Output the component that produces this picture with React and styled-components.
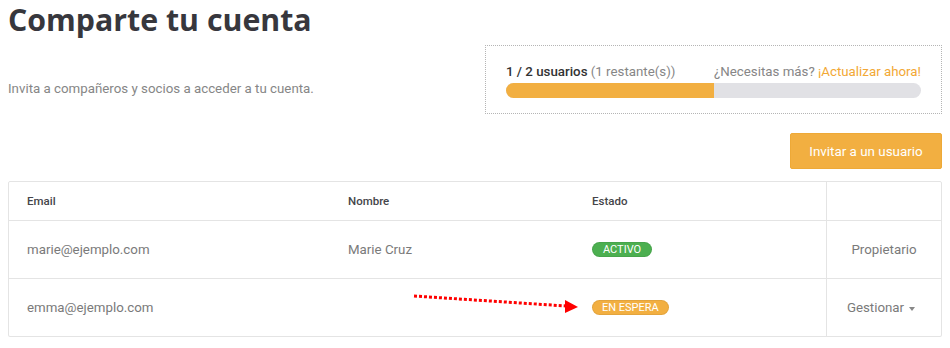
import React from 'react';
import styled, { createGlobalStyle } from 'styled-components';

const GlobalStyle = createGlobalStyle`
  body {
    margin: 0 8px 8px 8px;
    background: #fff;
    font-family: Roboto, "Liberation Sans", sans-serif;
  }
`;

const Page = styled.div`
  position: relative;
`;

const Title = styled.h1`
  margin: 0 0 10px 0;
  padding-top: 5px;
  font-family: "Open Sans", "Liberation Sans", sans-serif;
  font-weight: 700;
  font-size: 30.3px;
  line-height: 30px;
  color: #37373d;
`;

const TopRow = styled.div`
  display: flex;
  justify-content: space-between;
  align-items: flex-end;
`;

const Subtitle = styled.p`
  margin: 0 0 15px 0;
  font-size: 13.3px;
  line-height: 20px;
  color: #868686;
`;

const UsageBox = styled.div`
  width: 415px;
  border: 1px dotted #b5b5b5;
  padding: 17px 20px 15px 20px;
`;

const UsageLine = styled.div`
  display: flex;
  justify-content: space-between;
  font-size: 13.3px;
  line-height: 18px;
  color: #868686;
  margin-bottom: 2px;
`;

const Strong = styled.span`
  color: #333;
  font-weight: 500;
`;

const Upgrade = styled.span`
  color: #f2a835;
`;

const Bar = styled.div`
  height: 15px;
  border-radius: 8px;
  background: #e1e1e5;
  overflow: hidden;
`;

const BarFill = styled.div`
  height: 100%;
  background: #f2af41;
`;

const ButtonRow = styled.div`
  display: flex;
  justify-content: flex-end;
  margin: 19px 0 12px 0;
`;

const InviteButton = styled.button`
  height: 36px;
  width: 152px;
  border: 1px solid #eea937;
  border-radius: 2px;
  background: #f2af41;
  color: #fff;
  font-family: Roboto, "Liberation Sans", sans-serif;
  font-size: 13.4px;
  padding: 0;
`;

const Table = styled.div`
  border: 1px solid #e4e4e4;
  border-radius: 2px;
  box-shadow: 0 1px 1px rgba(0, 0, 0, 0.05);
`;

const Row = styled.div`
  display: grid;
  grid-template-columns: 320px 243px 254px 1fr;
  height: ${(p) => p.$h}px;
  border-top: ${(p) => (p.$first ? 'none' : '1px solid #e4e4e4')};
`;

const Cell = styled.div`
  display: flex;
  align-items: center;
  padding-left: ${(p) => p.$pl || 19}px;
  font-size: 13.3px;
  color: #7a7a7a;
`;

const HeadCell = styled(Cell)`
  font-size: 11.5px;
  font-weight: 500;
  color: #45454a;
`;

const ActionCell = styled.div`
  display: flex;
  align-items: center;
  justify-content: center;
  border-left: 1px solid #e4e4e4;
  font-size: 13.3px;
  color: #7a7a7a;
  gap: 5px;
`;

const Badge = styled.span`
  display: inline-block;
  padding: 0 ${(p) => p.$px}px;
  height: 15px;
  line-height: 15px;
  border-radius: 8px;
  background: ${(p) => p.$color};
  color: #fff;
  font-size: 11px;
  text-transform: uppercase;
  box-shadow: inset 0 0 0 1px rgba(0, 0, 0, 0.06);
`;

const Caret = styled.span`
  width: 0;
  height: 0;
  border-left: 3px solid transparent;
  border-right: 3px solid transparent;
  border-top: 4px solid #888;
  margin: 2px 6px 0 0;
`;

const Arrow = styled.svg`
  position: absolute;
  left: 392px;
  top: 284px;
`;

export default function App() {
  const used = 1;
  const total = 2;
  return (
    <Page>
      <GlobalStyle />
      <Title>Comparte tu cuenta</Title>
      <TopRow>
        <Subtitle>Invita a compañeros y socios a acceder a tu cuenta.</Subtitle>
        <UsageBox>
          <UsageLine>
            <span>
              <Strong>1 / 2 usuarios</Strong> (1 restante(s))
            </span>
            <span>
              ¿Necesitas más? <Upgrade>¡Actualizar ahora!</Upgrade>
            </span>
          </UsageLine>
          <Bar>
            <BarFill style={{ width: `${(used / total) * 100}%` }} />
          </Bar>
        </UsageBox>
      </TopRow>
      <ButtonRow>
        <InviteButton>Invitar a un usuario</InviteButton>
      </ButtonRow>
      <Table>
        <Row $h={38} $first>
          <HeadCell $pl={18}>Email</HeadCell>
          <HeadCell>Nombre</HeadCell>
          <HeadCell $pl={20}>Estado</HeadCell>
          <ActionCell />
        </Row>
        <Row $h={57}>
          <Cell $pl={18}>marie@ejemplo.com</Cell>
          <Cell>Marie Cruz</Cell>
          <Cell $pl={20}>
            <Badge $color="#4caf50" $px={11}>Activo</Badge>
          </Cell>
          <ActionCell>Propietario</ActionCell>
        </Row>
        <Row $h={57}>
          <Cell $pl={18}>emma@ejemplo.com</Cell>
          <Cell />
          <Cell $pl={20}>
            <Badge $color="#f2af41" $px={10}>En espera</Badge>
          </Cell>
          <ActionCell>
            Gestionar<Caret />
          </ActionCell>
        </Row>
      </Table>
      <Arrow width="190" height="40" viewBox="0 0 190 40">
        <line
          x1="14" y1="12" x2="166" y2="22"
          stroke="#ff0000" strokeWidth="3" strokeDasharray="3 2"
        />
        <polygon points="165,16 178,23 165,29" fill="#ff0000" />
      </Arrow>
    </Page>
  );
}
